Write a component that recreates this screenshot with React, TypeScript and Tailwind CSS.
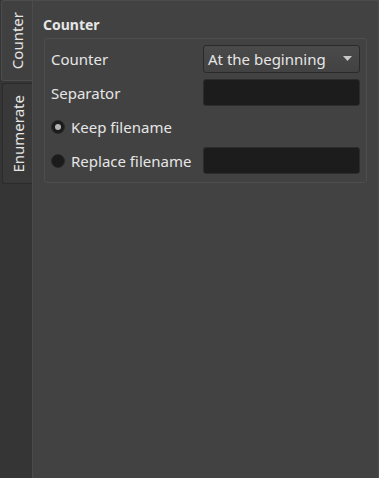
import { ReactNode } from 'react';

function Radio({ checked, label }: { checked?: boolean; label: string }) {
  return (
    <div className="flex items-center gap-[6px]">
      <span className="w-[14px] h-[14px] rounded-full bg-[#1b1b1b] border border-[#2a2a2a] flex items-center justify-center">
        {checked && <span className="w-[6px] h-[6px] rounded-full bg-[#b4b4b4]" />}
      </span>
      <span>{label}</span>
    </div>
  );
}

function Row({ left, right }: { left: ReactNode; right?: ReactNode }) {
  return (
    <div className="flex items-center justify-between h-[27px]">
      {left}
      {right}
    </div>
  );
}

const field = 'w-[157px] h-[27px] rounded-[3px] bg-[#1c1c1c] border border-[#2c2c2c]';

export default function App() {
  return (
    <div
      className="w-[379px] h-[478px] flex bg-[#353535] text-[#e6e6e6] text-[15px] leading-[20px]"
      style={{ fontFamily: '"Noto Sans", sans-serif' }}
    >
      {/* Tabs */}
      <div className="w-[32px] shrink-0 flex flex-col pl-[1px]">
        <div className="h-[81px] bg-[#404040] border-l border-t border-b border-[#4c4c4c] rounded-l-[3px] flex items-center justify-center">
          <span className="[writing-mode:vertical-rl] rotate-180 whitespace-nowrap">Counter</span>
        </div>
        <div className="mt-[2px] ml-[1px] h-[101px] bg-[#393939] border border-r-0 border-[#2b2b2b] rounded-l-[3px] flex items-center justify-center">
          <span className="[writing-mode:vertical-rl] rotate-180 whitespace-nowrap">Enumerate</span>
        </div>
      </div>

      {/* Panel */}
      <div className="flex-1 bg-[#424242] border-l border-t border-r border-[#4c4c4c] pl-[10px] pr-[11px] pt-[14px]">
        <div className="font-bold text-[14px] leading-[20px]">Counter</div>
        <div className="mt-[3px] ml-[1px] border border-[#4e4e4e] rounded-[3px] px-[6px] pt-[6px] pb-[8px] flex flex-col gap-[7px]">
          <Row
            left={<span>Counter</span>}
            right={
              <div className="w-[157px] h-[28px] rounded-[3px] border border-[#2a2a2a] bg-gradient-to-b from-[#4a4a4a] to-[#424242] flex items-center justify-between pl-[4px] pr-[7px]">
                <span>At the beginning</span>
                <svg width="9" height="5" viewBox="0 0 9 5">
                  <path d="M0 0h9L4.5 5z" fill="#c8c8c8" />
                </svg>
              </div>
            }
          />
          <Row left={<span>Separator</span>} right={<div className={field} />} />
          <Row left={<Radio checked label="Keep filename" />} />
          <Row left={<Radio label="Replace filename" />} right={<div className={field} />} />
        </div>
      </div>
    </div>
  );
}
